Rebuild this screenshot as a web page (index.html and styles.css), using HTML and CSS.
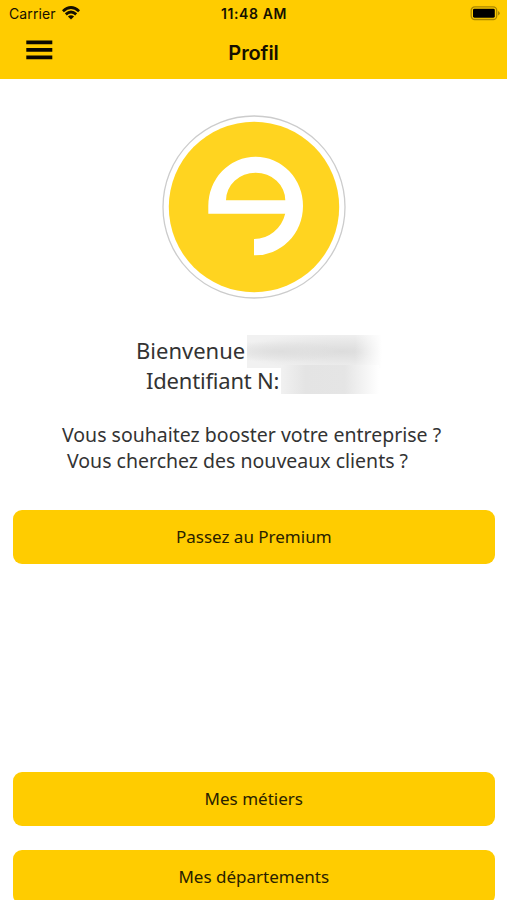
FILE: index.html
```html
<!DOCTYPE html>
<html lang="fr">
<head>
<meta charset="utf-8">
<title>Profil</title>
<link rel="stylesheet" href="styles.css">
</head>
<body>
<header class="header">
  <div class="status">
    <div class="carrier"><span>Carrier</span>
      <svg class="wifi" width="18" height="14" viewBox="0 0 18 14" fill="none" stroke="#151000" stroke-width="2.8"><path d="M.9 5.3Q9-2.2 17.1 5.3M3.8 8.4Q9 3.6 14.2 8.4"/><path d="M9 13.6 5.9 10.5Q9 7.8 12.1 10.5Z" fill="#151000" stroke="none"/></svg>
    </div>
    <div class="time">11:48 AM</div>
    <svg class="battery" width="31" height="15" viewBox="0 0 31 15"><rect x="1.2" y=".9" width="25.5" height="12.6" rx="3.5" fill="none" stroke="#a98700" stroke-width="1.3"/><rect x="3" y="2.7" width="21.8" height="9" rx="1.4" fill="#000"/><path d="M28 5v4.5q1.8-.8 1.8-2.25T28 5Z" fill="#a98700"/></svg>
  </div>
  <div class="navbar">
    <svg class="menu" width="27" height="20" viewBox="0 0 27 20"><path d="M.3 2.3h26M.3 9.8h26M.3 17.3h26" stroke="#0b0800" stroke-width="3.7"/></svg>
    <h1 class="title">Profil</h1>
  </div>
</header>
<main class="profile">
  <svg class="avatar" width="184" height="184" viewBox="0 0 184 184">
    <circle cx="92" cy="92" r="91" fill="#fff" stroke="#ccc" stroke-width="1.3"/>
    <circle cx="92" cy="92" r="85.2" fill="#ffd420"/>
    <path fill="#fff" fill-rule="evenodd" d="M46.3 98.7V91A47.3 49.3 0 0 1 141 91A47.7 49.3 0 0 1 92 140.3V124A32 33.5 0 0 0 123.2 98.7ZM64 85.3H123.3A29.65 27.6 0 0 0 64 85.3Z"/>
  </svg>
  <div class="identity">
    <div class="line welcome"><span class="label">Bienvenue</span><span class="redacted name"></span></div>
    <div class="line ident"><span class="label">Identifiant N:</span><span class="redacted number"></span></div>
  </div>
  <div class="pitch">
    <p class="first">Vous souhaitez booster votre entreprise ?</p>
    <p class="second">Vous cherchez des nouveaux clients ?</p>
  </div>
  <button class="button premium">Passez au Premium</button>
  <button class="button trades">Mes métiers</button>
  <button class="button areas">Mes départements</button>
</main>
</body>
</html>
```
FILE: styles.css
```css
* { box-sizing: border-box; }
body {
  margin: 0;
  height: 900px;
  overflow: hidden;
  background: #fff;
  color: #333;
  font-family: "Noto Sans", sans-serif;
}
.header {
  height: 79px;
  background: #fc0;
  color: #151000;
  font-family: Inter, sans-serif;
}
.status {
  display: grid;
  grid-template-columns: 1fr auto 1fr;
  height: 27px;
  padding: 0 6px 0 9px;
}
.carrier {
  display: flex;
  gap: 6px;
  font-size: 14px;
  line-height: 28px;
  letter-spacing: .1px;
}
.wifi { margin-top: 6px; }
.time {
  font-size: 14px;
  font-weight: 600;
  line-height: 28px;
  letter-spacing: .6px;
  margin-right: 2px;
}
.battery { justify-self: end; margin-top: 6px; }
.navbar {
  display: grid;
  grid-template-columns: 1fr auto 1fr;
  height: 52px;
  padding: 0 26px;
}
.menu { margin-top: 13px; }
.title {
  margin: 0;
  font-size: 20px;
  font-weight: 600;
  line-height: 52px;
  letter-spacing: -.1px;
}
.profile {
  display: flex;
  flex-direction: column;
  padding: 36px 12.5px 0 13px;
}
.avatar { margin-left: 149px; }
.identity {
  margin-top: 36px;
  font-size: 22px;
}
.line { display: flex; height: 30px; }
.label { line-height: 31px; white-space: nowrap; }
.welcome { padding-left: 123px; }
.welcome .label { width: 111px; }
.ident { padding-left: 133px; }
.ident .label { width: 135px; letter-spacing: -.2px; }
.redacted { flex: none; }
.name {
  width: 135px;
  height: 33px;
  background:
    linear-gradient(90deg, transparent 80%, #fff),
    radial-gradient(ellipse at 25% 50%, #dedede, transparent 45%),
    radial-gradient(ellipse at 70% 50%, #dcdcdc, #f1f1f1 80%);
}
.number {
  width: 98px;
  height: 29px;
  background: linear-gradient(90deg, #f1f1f1, #e4e4e4 25%, #e5e5e5 65%, #fff);
}
.pitch {
  margin-top: 27px;
  font-size: 19.5px;
  line-height: 26px;
  white-space: nowrap;
}
.pitch p { margin: 0; }
.first { padding-left: 49px; }
.second { padding-left: 54px; }
.button {
  height: 54px;
  padding: 0;
  border: 0;
  border-radius: 9px;
  background: #fc0;
  color: #292100;
  font-family: inherit;
  font-size: 17px;
  line-height: 54px;
}
.premium { margin-top: 36px; }
.trades { margin-top: 208px; }
.areas { margin-top: 24px; }
```
